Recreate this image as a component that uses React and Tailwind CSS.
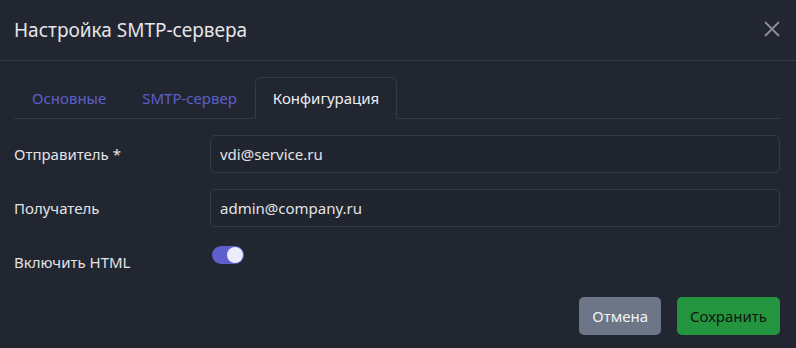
import React, { useState } from 'react';

const tabs = ['Основные', 'SMTP-сервер', 'Конфигурация'];

function Field({ label, value }) {
  return (
    <div className="flex items-center">
      <label className="w-[196px] shrink-0 text-[#e2e3e6]">{label}</label>
      <input
        readOnly
        value={value}
        className="flex-1 h-[38px] px-[9px] rounded-[5px] bg-[#21252f] border border-[#363a47] text-[#e2e3e6] outline-none"
      />
    </div>
  );
}

export default function App() {
  const [active, setActive] = useState(2);
  const [html, setHtml] = useState(true);

  return (
    <div
      className="w-[796px] h-[348px] bg-[#222631] text-[15px] flex flex-col overflow-hidden"
      style={{ fontFamily: '"Segoe UI", "Noto Sans", sans-serif' }}
    >
      <div className="h-[61px] shrink-0 flex items-center justify-between pl-[14px] pr-[16px] border-b border-[#363a48]">
        <h2 className="text-[19px] text-[#e4e5e8] leading-none">Настройка SMTP-сервера</h2>
        <button className="text-[#8b8e97] mt-[-2px]">
          <svg width="16" height="16" viewBox="0 0 16 16" fill="none" stroke="currentColor" strokeWidth="1.8">
            <path d="M1 1L15 15M15 1L1 15" />
          </svg>
        </button>
      </div>

      <div className="px-[14px] pt-[16px] pr-[16px] flex-1 flex flex-col">
        <div className="flex border-b border-[#363a48] h-[42px]">
          {tabs.map((t, i) => (
            <button
              key={t}
              onClick={() => setActive(i)}
              className={
                i === active
                  ? 'px-[17px] h-[42px] -mb-px border border-[#363a48] border-b-[#222631] rounded-t-[6px] text-[#eceef2] bg-[#222631]'
                  : 'px-[17px] h-[42px] border border-transparent text-[#5d5fc9]'
              }
            >
              {t}
            </button>
          ))}
        </div>

        <div className="flex flex-col gap-[16px] pt-[16px]">
          <Field label="Отправитель *" value="vdi@service.ru" />
          <Field label="Получатель" value="admin@company.ru" />
          <div className="flex items-start">
            <span className="w-[196px] shrink-0 text-[#e2e3e6] pt-[8px]">Включить HTML</span>
            <button
              onClick={() => setHtml(!html)}
              className={
                'mt-[3px] ml-[2px] w-[32px] h-[18px] rounded-full flex items-center px-[1px] ' +
                (html ? 'bg-[#5f60cc] justify-end' : 'bg-[#3a3e4a] justify-start')
              }
            >
              <span className="w-[16px] h-[16px] rounded-full bg-[#ecebfb]" />
            </button>
          </div>
        </div>

        <div className="flex justify-end gap-[16px] mt-auto mb-[13px]">
          <button className="h-[38px] px-[13px] rounded-[5px] bg-[#6c7686] text-[#f1f2f4]">Отмена</button>
          <button className="h-[38px] px-[13px] rounded-[5px] bg-[#24953f] text-[#101612]">Сохранить</button>
        </div>
      </div>
    </div>
  );
}
